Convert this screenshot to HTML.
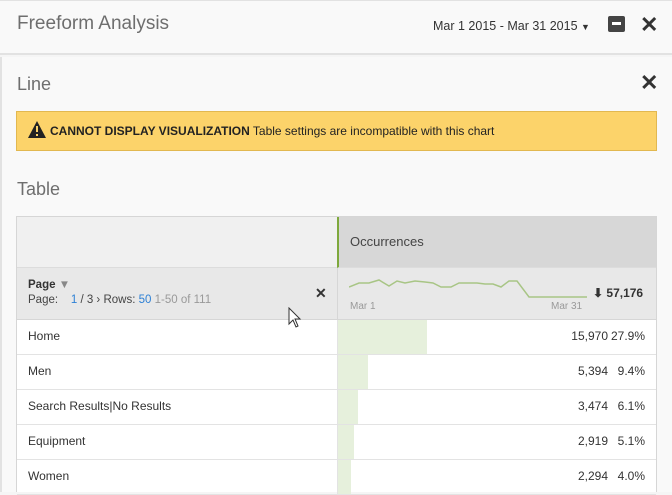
<!DOCTYPE html>
<html><head><style>
*{margin:0;padding:0;box-sizing:border-box}
body{width:672px;height:492px;overflow:hidden;background:#f5f5f5;font-family:"Liberation Sans",sans-serif;color:#4b4b4b;position:relative}
.abs{position:absolute}
.hdr{left:0;top:0;width:672px;height:55px;background:#f9f9f9;border-bottom:2px solid #e2e2e2;border-top:1px solid #e2e2e2}
.panel{left:0;top:57px;width:672px;height:435px;background:#f9f9f9;border-left:2px solid #e2e2e2}
.x{font-weight:bold;font-size:22px;color:#333}
.tbl{left:16px;top:216px;width:641px;height:276px;border:1px solid #d6d6d6;border-bottom:none;background:#fff}
.row{position:absolute;left:0;width:639px;height:35px;border-bottom:1px solid #e3e3e3;font-size:12px;color:#333}
.row .n{position:absolute;left:11px;top:9px}
.row .bar{position:absolute;left:321px;top:0;height:34px;background:#e6f0dc}
.row .v{position:absolute;right:48px;top:9px}
.row .p{position:absolute;right:11px;top:9px}
.row:after{content:"";position:absolute;left:320px;top:0;width:1px;height:35px;background:#e3e3e3}
</style></head><body>
<div class="abs hdr"></div>
<div class="abs" style="left:17px;top:13px;font-size:19px;color:#6e6e6e">Freeform Analysis</div>
<div class="abs" style="left:433px;top:19px;font-size:12.5px;color:#333">Mar 1 2015 - Mar 31 2015 <span style="font-size:9px">▼</span></div>
<div class="abs" style="left:608px;top:16px;width:17px;height:16px;background:#444;border-radius:2px"><div style="position:absolute;left:4px;top:6px;width:9px;height:3px;background:#fff"></div></div>
<div class="abs x" style="left:640px;top:12px">✕</div>
<div class="abs panel"></div>
<div class="abs" style="left:17px;top:74px;font-size:18px;color:#6e6e6e">Line</div>
<div class="abs x" style="left:640px;top:70px">✕</div>
<div class="abs" style="left:16px;top:111px;width:641px;height:40px;background:#fcd36a;border:1px solid #e2b850"></div>
<svg class="abs" style="left:28px;top:121px" width="18" height="17" viewBox="0 0 18 17"><path d="M9 0L18 17H0Z" fill="#222"/><rect x="8" y="5" width="2" height="6" fill="#fcd36a"/><rect x="8" y="13" width="2" height="2" fill="#fcd36a"/></svg>
<div class="abs" style="left:50px;top:124px;font-size:12px;color:#222"><b>CANNOT DISPLAY VISUALIZATION</b> Table settings are incompatible with this chart</div>
<div class="abs" style="left:17px;top:179px;font-size:18px;color:#6e6e6e">Table</div>
<div class="abs tbl">
 <div class="abs" style="left:0;top:0;width:320px;height:51px;background:#f0f0f0;border-bottom:1px solid #dcdcdc"></div>
 <div class="abs" style="left:320px;top:0;width:319px;height:51px;background:#d7d7d7;border-left:2px solid #7ea83c;border-bottom:1px solid #dcdcdc"></div>
 <div class="abs" style="left:333px;top:17px;font-size:13px;color:#444">Occurrences</div>
 <div class="abs" style="left:0;top:51px;width:639px;height:52px;background:#e8e8e8;border-bottom:1px solid #d6d6d6"></div>
 <div class="abs" style="left:320px;top:51px;width:1px;height:52px;background:#d6d6d6"></div>
 <div class="abs" style="left:11px;top:62px;font-size:11.5px;font-weight:bold;color:#333">Page <span style="color:#888">▼</span></div>
 <div class="abs" style="left:11px;top:77px;font-size:11.5px;color:#444">Page:&nbsp;&nbsp;&nbsp;&nbsp;<span style="color:#2d80d5">1</span> / 3 › Rows: <span style="color:#2d80d5">50</span> <span style="color:#999">1-50 of 111</span></div>
 <div class="abs" style="left:298px;top:68px;font-size:14px;font-weight:bold;color:#333">✕</div>
 <svg class="abs" style="left:332px;top:60px" width="245" height="26"><polyline points="0,10 10,6 20,6 30,3 40,9 48,4 56,6 66,4 76,5 84,6 92,10 102,10 110,6 128,6 136,7 144,7 152,10 160,4 168,4 180,20 210,20 238,20" fill="none" stroke="#a8c585" stroke-width="1.5"/></svg>
 <div class="abs" style="left:333px;top:84px;font-size:10px;color:#999">Mar 1</div>
 <div class="abs" style="left:534px;top:84px;font-size:10px;color:#999">Mar 31</div>
 <div class="abs" style="left:576px;top:69px;font-size:12px;font-weight:bold;color:#333">⬇ 57,176</div>
 <div class="row" style="top:103px"><div class="bar" style="width:89px"></div><span class="n">Home</span><span class="v">15,970</span><span class="p">27.9%</span></div>
 <div class="row" style="top:138px"><div class="bar" style="width:30px"></div><span class="n">Men</span><span class="v">5,394</span><span class="p">9.4%</span></div>
 <div class="row" style="top:173px"><div class="bar" style="width:20px"></div><span class="n">Search Results|No Results</span><span class="v">3,474</span><span class="p">6.1%</span></div>
 <div class="row" style="top:208px"><div class="bar" style="width:16px"></div><span class="n">Equipment</span><span class="v">2,919</span><span class="p">5.1%</span></div>
 <div class="row" style="top:243px"><div class="bar" style="width:13px"></div><span class="n">Women</span><span class="v">2,294</span><span class="p">4.0%</span></div>
</div>
<svg class="abs" style="left:288px;top:307px" width="14" height="22"><path d="M1 1V17L5 13L8 20L10 19L7 12H12Z" fill="#fff" stroke="#333" stroke-width="1"/></svg>
</body></html>
